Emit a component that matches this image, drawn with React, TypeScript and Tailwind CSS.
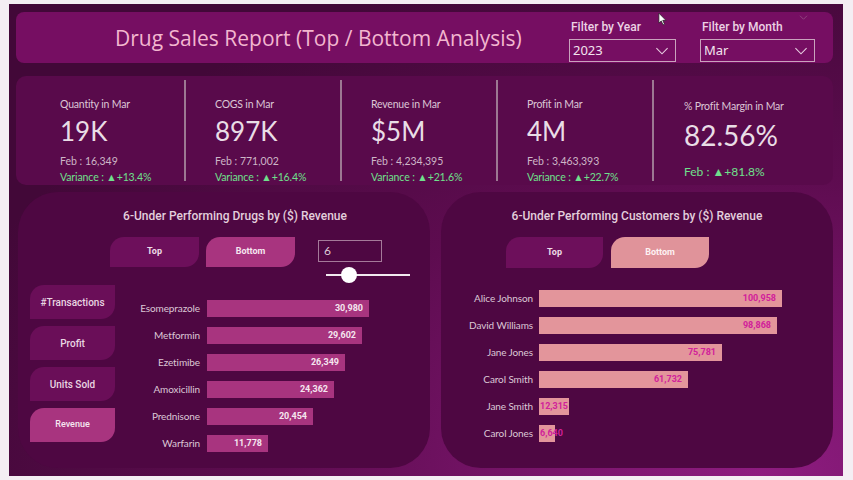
import { FC } from 'react';

const drugs = [
  { name: 'Esomeprazole', value: '30,980', w: 162 },
  { name: 'Metformin', value: '29,602', w: 155 },
  { name: 'Ezetimibe', value: '26,349', w: 138 },
  { name: 'Amoxicillin', value: '24,362', w: 127 },
  { name: 'Prednisone', value: '20,454', w: 106 },
  { name: 'Warfarin', value: '11,778', w: 61 },
];

const customers = [
  { name: 'Alice Johnson', value: '100,958', w: 243 },
  { name: 'David Williams', value: '98,868', w: 238 },
  { name: 'Jane Jones', value: '75,781', w: 183 },
  { name: 'Carol Smith', value: '61,732', w: 149 },
  { name: 'Jane Smith', value: '12,315', w: 30 },
  { name: 'Carol Jones', value: '6,640', w: 16 },
];

const kpis = [
  { label: 'Quantity in Mar', value: '19K', feb: 'Feb : 16,349', variance: '+13.4%', w: 'w-[170px] pl-[44px]' },
  { label: 'COGS in Mar', value: '897K', feb: 'Feb : 771,002', variance: '+16.4%', w: 'w-[156px] pl-[29px]' },
  { label: 'Revenue in Mar', value: '$5M', feb: 'Feb : 4,234,395', variance: '+21.6%', w: 'w-[156px] pl-[29px]' },
  { label: 'Profit in Mar', value: '4M', feb: 'Feb : 3,463,393', variance: '+22.7%', w: 'w-[156px] pl-[29px]' },
];

const Chevron: FC<{ className?: string }> = ({ className }) => (
  <svg viewBox="0 0 16 10" className={className} fill="none" stroke="currentColor" strokeWidth="1.4">
    <path d="M1 1.5 L8 8.5 L15 1.5" />
  </svg>
);

const Dropdown: FC<{ label: string; value: string; w: string }> = ({ label, value, w }) => (
  <div className="flex flex-col">
    <div className="pl-[2px] text-[12px] font-medium leading-[16px] text-[#ecd2e4] [font-family:Roboto,sans-serif]">
      {label}
    </div>
    <div
      className={`${w} mt-[4px] flex h-[23px] items-center justify-between border border-[#c9a4bd] pl-[3px] pr-[6px] text-[13px] text-[#f3e3ee] [font-family:'Noto_Sans',sans-serif]`}
    >
      <span>{value}</span>
      <Chevron className="h-[8px] w-[14px] text-[#e7cde0]" />
    </div>
  </div>
);

const App: FC = () => {
  return (
    <div className="h-[480px] w-[853px] overflow-hidden bg-[#f4eef3] pl-[9px] pt-[4px]">
      <div className="relative flex h-[472px] w-[834px] flex-col bg-[radial-gradient(ellipse_at_90%_100%,#8e1c80_0%,#5e0c50_45%,#420838_80%)] pt-[8px]">
        {/* header */}
        <div className="ml-[7px] flex h-[51px] w-[817px] items-center rounded-[8px] bg-[#760e62]">
          <div className="pl-[99px] text-[21px] leading-[28px] text-[#f3b6cf] [font-family:'Open_Sans',sans-serif]">
            Drug Sales Report (Top / Bottom Analysis)
          </div>
          <div className="ml-auto mr-[18px] mt-[6px] flex gap-[24px]">
            <Dropdown label="Filter by Year" value="2023" w="w-[107px]" />
            <div className="relative">
              <Dropdown label="Filter by Month" value="Mar" w="w-[115px]" />
              <Chevron className="absolute right-[7px] top-[-4px] h-[5px] w-[9px] text-[#9a5a8c]" />
            </div>
          </div>
        </div>

        {/* mouse pointer */}
        <svg viewBox="0 0 10 15" className="absolute left-[649px] top-[8px] h-[14px] w-[9px]">
          <path d="M1 1 L1 12 L3.6 9.6 L5.6 14 L7.2 13.2 L5.3 9 L8.8 9 Z" fill="#fff" stroke="#222" strokeWidth="0.8" />
        </svg>

        {/* KPI strip */}
        <div className="ml-[7px] mt-[13px] flex h-[109px] w-[817px] rounded-[10px] bg-[#590a4b] py-[4px] [font-family:Lato,sans-serif]">
          {kpis.map((k) => (
            <div key={k.label} className={`${k.w} flex flex-col border-r-2 border-[#9d7893] pt-[16px]`}>
              <div className="text-[10.5px] leading-[16px] tracking-[-0.2px] text-[#dcc6d6]">{k.label}</div>
              <div className="mt-[4px] text-[26px] leading-[30px] text-[#e9dde6]">{k.value}</div>
              <div className="mt-[8px] text-[10.5px] leading-[15px] text-[#cdb6c7]">{k.feb}</div>
              <div className="mt-[1px] text-[10.5px] leading-[15px] tracking-[-0.1px] text-[#6fe08c]">
                Variance : ▲{k.variance}
              </div>
            </div>
          ))}
          <div className="flex flex-col pl-[30px] pt-[18px]">
            <div className="text-[10.5px] leading-[16px] tracking-[-0.2px] text-[#dcc6d6]">% Profit Margin in Mar</div>
            <div className="mt-[5px] text-[28px] leading-[32px] text-[#e9dde6]">82.56%</div>
            <div className="mt-[13px] text-[12px] leading-[16px] text-[#6fe08c]">Feb : ▲+81.8%</div>
          </div>
        </div>

        {/* lower panels */}
        <div className="ml-[9px] mt-[7px] flex gap-[11px]">
          {/* drugs panel */}
          <div className="flex h-[276px] w-[412px] flex-col rounded-[40px] bg-[#4e0742] pt-[16px]">
            <div className="pl-[22px] text-center text-[12px] font-medium leading-[16px] text-[#e3cfdc] [font-family:Roboto,sans-serif]">
              6-Under Performing Drugs by ($) Revenue
            </div>
            <div className="ml-[92px] mt-[13px] flex items-start [font-family:Roboto,sans-serif]">
              <div className="flex h-[30px] w-[89px] items-center justify-center rounded-tl-[14px] rounded-br-[14px] bg-[#6d0f5b] text-[9px] font-bold text-[#eedbe7]">
                Top
              </div>
              <div className="ml-[7px] flex h-[30px] w-[89px] items-center justify-center rounded-tl-[14px] rounded-br-[14px] bg-[#a8347f] text-[9px] font-bold text-[#f6e6f0]">
                Bottom
              </div>
              <div className="ml-[23px] mt-[3px] flex flex-col">
                <div className="flex h-[22px] w-[64px] items-center border border-[#a57a9a] pl-[5px] text-[12px] text-[#dccbd7] [font-family:Lato,sans-serif]">
                  6
                </div>
                <div className="relative ml-[8px] mt-[5px] flex h-[16px] w-[84px] items-center">
                  <div className="h-[2px] w-full bg-[#f1e9ef]" />
                  <div className="absolute left-[15px] top-0 h-[16px] w-[16px] rounded-full bg-white" />
                </div>
              </div>
            </div>
            <div className="mt-[2px] flex">
              <div className="ml-[12px] flex flex-col gap-[7px] [font-family:Roboto,sans-serif]">
                {['#Transactions', 'Profit', 'Units Sold', 'Revenue'].map((b) => (
                  <div
                    key={b}
                    className={`flex h-[34px] w-[85px] items-center justify-center rounded-tl-[14px] rounded-br-[14px] font-medium ${
                      b === 'Revenue'
                        ? 'bg-[#a8347f] text-[9px] font-bold text-[#f7e8f1]'
                        : 'bg-[#6a0e58] text-[10px] text-[#e9d6e2]'
                    }`}
                  >
                    {b}
                  </div>
                ))}
              </div>
              <div className="ml-[5px] flex flex-col gap-[10px] pt-[15px]">
                {drugs.map((d) => (
                  <div key={d.name} className="flex h-[17px] items-center">
                    <div className="w-[80px] text-right text-[10px] tracking-[-0.1px] text-[#dcc8d6] [font-family:Lato,sans-serif]">
                      {d.name}
                    </div>
                    <div
                      className="ml-[7px] flex h-[17px] items-center justify-end bg-[#a8347f] pr-[6px] text-[9px] font-bold text-[#f5e6ef] [font-family:Roboto,sans-serif]"
                      style={{ width: d.w }}
                    >
                      {d.value}
                    </div>
                  </div>
                ))}
              </div>
            </div>
          </div>

          {/* customers panel */}
          <div className="flex h-[276px] w-[392px] flex-col rounded-[40px] bg-[#4e0742] pt-[16px]">
            <div className="text-center text-[12px] font-medium leading-[16px] text-[#e3cfdc] [font-family:Roboto,sans-serif]">
              6-Under Performing Customers by ($) Revenue
            </div>
            <div className="ml-[65px] mt-[13px] flex gap-[8px] [font-family:Roboto,sans-serif]">
              <div className="flex h-[31px] w-[97px] items-center justify-center rounded-tl-[14px] rounded-br-[14px] bg-[#6d0f5b] text-[9px] font-bold text-[#eedbe7]">
                Top
              </div>
              <div className="flex h-[31px] w-[98px] items-center justify-center rounded-tl-[14px] rounded-br-[14px] bg-[#e0939a] text-[9px] font-bold text-[#fdf1f3]">
                Bottom
              </div>
            </div>
            <div className="ml-[12px] mt-[22px] flex flex-col gap-[10px]">
              {customers.map((c) => (
                <div key={c.name} className="flex h-[17px] items-center">
                  <div className="w-[80px] whitespace-nowrap text-right text-[10px] tracking-[-0.1px] text-[#dcc8d6] [font-family:Lato,sans-serif]">
                    {c.name}
                  </div>
                  <div
                    className={`ml-[6px] flex h-[17px] items-center bg-[#e3959b] text-[9px] font-bold text-[#d1219a] [font-family:Roboto,sans-serif] ${
                      c.w < 40 ? 'justify-start overflow-visible whitespace-nowrap pl-[1px]' : 'justify-end pr-[6px]'
                    }`}
                    style={{ width: c.w }}
                  >
                    {c.value}
                  </div>
                </div>
              ))}
            </div>
          </div>
        </div>
      </div>
    </div>
  );
};

export default App;
